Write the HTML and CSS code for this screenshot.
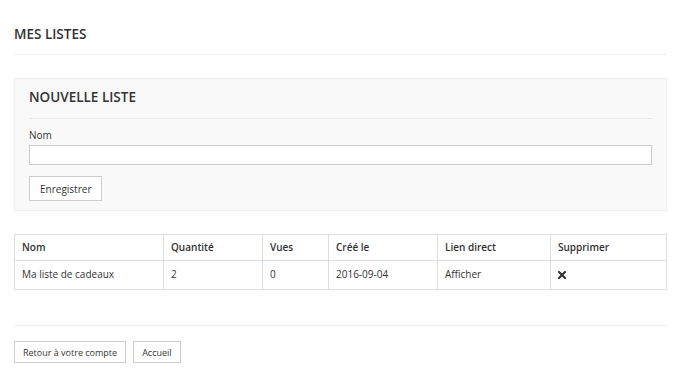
FILE: index.html
```html
<!DOCTYPE html>
<html lang="fr">
<head>
    <meta charset="UTF-8">
    <meta name="viewport" content="width=device-width, initial-scale=1.0">
    <title>Mes listes</title>
    <link rel="stylesheet" href="styles.css">
</head>
<body>

<div class="page">
    <h1 class="page-title">MES LISTES</h1>

    <div class="panel">
        <h2 class="panel-title">NOUVELLE LISTE</h2>
        <label for="nom">Nom</label>
        <input type="text" id="nom">
        <button class="btn">Enregistrer</button>
    </div>

    <table class="lists">
        <thead>
            <tr>
                <th class="col-name">Nom</th>
                <th class="col-qty">Quantité</th>
                <th class="col-views">Vues</th>
                <th class="col-date">Créé le</th>
                <th class="col-link">Lien direct</th>
                <th>Supprimer</th>
            </tr>
        </thead>
        <tbody>
            <tr>
                <td>Ma liste de cadeaux</td>
                <td>2</td>
                <td>0</td>
                <td>2016-09-04</td>
                <td><a href="#">Afficher</a></td>
                <td>
                    <a href="#" class="remove" title="Supprimer">
                        <svg width="8" height="8" viewBox="0 0 8 8"><path d="M1 1L7 7M7 1L1 7" stroke="#333" stroke-width="2.2" stroke-linecap="square"/></svg>
                    </a>
                </td>
            </tr>
        </tbody>
    </table>

    <div class="footer">
        <button class="btn btn-sm">Retour à votre compte</button>
        <button class="btn btn-sm">Accueil</button>
    </div>
</div>

</body>
</html>
```

FILE: styles.css
```css
body {
    font-family: "Open Sans", Arial, sans-serif;
    font-size: 10px;
    color: #333;
    background-color: white;
    margin: 0;
}
.page {
    padding: 24px 20px 20px 14px;
}
.page-title {
    font-size: 13.5px;
    font-weight: 600;
    line-height: 20px;
    margin: 0;
    padding-bottom: 10px;
    border-bottom: 1px solid #eee;
}
.panel {
    background-color: #f9f9f9;
    border: 1px solid #eee;
    margin-top: 23px;
    padding: 8px 14px 9px;
}
.panel-title {
    font-size: 13.5px;
    font-weight: 600;
    line-height: 20px;
    margin: 0;
    padding-bottom: 11px;
    border-bottom: 1px solid #e8e8e8;
}
.panel label {
    display: block;
    line-height: 15px;
    margin-top: 9px;
}
.panel input[type="text"] {
    display: block;
    box-sizing: border-box;
    width: 100%;
    height: 20px;
    margin: 2px 0 11px;
    border: 1px solid #ccc;
    background-color: white;
}
.btn {
    font-family: inherit;
    font-size: 10px;
    color: #333;
    background-color: white;
    border: 1px solid #ccc;
    border-radius: 0;
    height: 25px;
    padding: 0 10px;
    cursor: pointer;
}
.btn-sm {
    font-size: 9px;
    height: 22px;
    padding: 0 8px;
}
.lists {
    width: 100%;
    border-collapse: collapse;
    margin-top: 23px;
    line-height: 15px;
}
.lists th,
.lists td {
    border: 1px solid #ddd;
    text-align: left;
    padding: 5px 7px;
}
.lists th {
    font-weight: 600;
}
.lists td {
    padding-top: 6px;
    padding-bottom: 7px;
}
.lists a {
    color: #333;
    text-decoration: none;
}
.remove svg {
    vertical-align: -1px;
}
.col-name { width: 134px; }
.col-qty { width: 84px; }
.col-views { width: 51px; }
.col-date { width: 94px; }
.col-link { width: 98px; }
.footer {
    margin-top: 35px;
    border-top: 1px solid #eee;
    padding-top: 15px;
    display: flex;
    gap: 7px;
}
```
